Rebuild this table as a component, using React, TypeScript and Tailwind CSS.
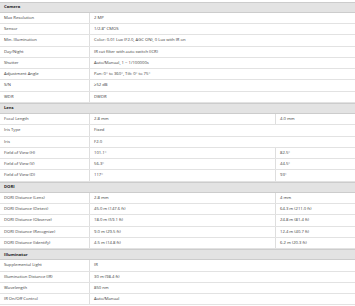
type Row = { label: string; values: string[] };
type Section = { title: string; rows: Row[] };

const sections: Section[] = [
  {
    title: "Camera",
    rows: [
      { label: "Max Resolution", values: ["2 MP"] },
      { label: "Sensor", values: ['1/2.8" CMOS'] },
      { label: "Min. Illumination", values: ["Color: 0.01 Lux (F2.0, AGC ON), 0 Lux with IR on"] },
      { label: "Day/Night", values: ["IR cut filter with auto switch (ICR)"] },
      { label: "Shutter", values: ["Auto/Manual, 1 ~ 1/100000s"] },
      { label: "Adjustment Angle", values: ["Pan: 0° to 360°, Tilt: 0° to 75°"] },
      { label: "S/N", values: ["≥52 dB"] },
      { label: "WDR", values: ["DWDR"] },
    ],
  },
  {
    title: "Lens",
    rows: [
      { label: "Focal Length", values: ["2.8 mm", "4.0 mm"] },
      { label: "Iris Type", values: ["Fixed"] },
      { label: "Iris", values: ["F2.0"] },
      { label: "Field of View (H)", values: ["101.1°", "82.5°"] },
      { label: "Field of View (V)", values: ["56.3°", "44.5°"] },
      { label: "Field of View (D)", values: ["117°", "93°"] },
    ],
  },
  {
    title: "DORI",
    rows: [
      { label: "DORI Distance (Lens)", values: ["2.8 mm", "4 mm"] },
      { label: "DORI Distance (Detect)", values: ["45.0 m (147.6 ft)", "64.3 m (211.0 ft)"] },
      { label: "DORI Distance (Observe)", values: ["18.0 m (59.1 ft)", "24.8 m (81.4 ft)"] },
      { label: "DORI Distance (Recognize)", values: ["9.0 m (29.5 ft)", "12.4 m (40.7 ft)"] },
      { label: "DORI Distance (Identify)", values: ["4.5 m (14.8 ft)", "6.2 m (20.3 ft)"] },
    ],
  },
  {
    title: "Illuminator",
    rows: [
      { label: "Supplemental Light", values: ["IR"] },
      { label: "Illumination Distance (IR)", values: ["30 m (98.4 ft)"] },
      { label: "Wavelength", values: ["850 nm"] },
      { label: "IR On/Off Control", values: ["Auto/Manual"] },
    ],
  },
];

const App = () => {
  return (
    <div className="w-[355px] h-[306px] overflow-hidden bg-white pt-[1.5px] font-['Open_Sans',sans-serif] text-[4.2px] leading-none text-[#3c3c3c]">
      {sections.map((s) => (
        <div key={s.title}>
          {/* Section header */}
          <div className="flex h-[11.25px] items-center border-y border-[#cccccc] bg-[#e3e3e3] px-[4px] font-bold text-[#1a1a1a]">
            {s.title}
          </div>
          {s.rows.map((r) => (
            <div key={r.label} className="flex h-[11.25px] border-b border-[#e2e2e2]">
              <div className="flex w-[90px] shrink-0 items-center border-r border-[#dedede] pl-[4px]">{r.label}</div>
              {r.values.length > 1 ? (
                <>
                  <div className="flex w-[186px] shrink-0 items-center border-r border-[#dedede] pl-[4px]">{r.values[0]}</div>
                  <div className="flex flex-1 items-center pl-[4px]">{r.values[1]}</div>
                </>
              ) : (
                <div className="flex flex-1 items-center pl-[4px]">{r.values[0]}</div>
              )}
            </div>
          ))}
        </div>
      ))}
    </div>
  );
};

export default App;
